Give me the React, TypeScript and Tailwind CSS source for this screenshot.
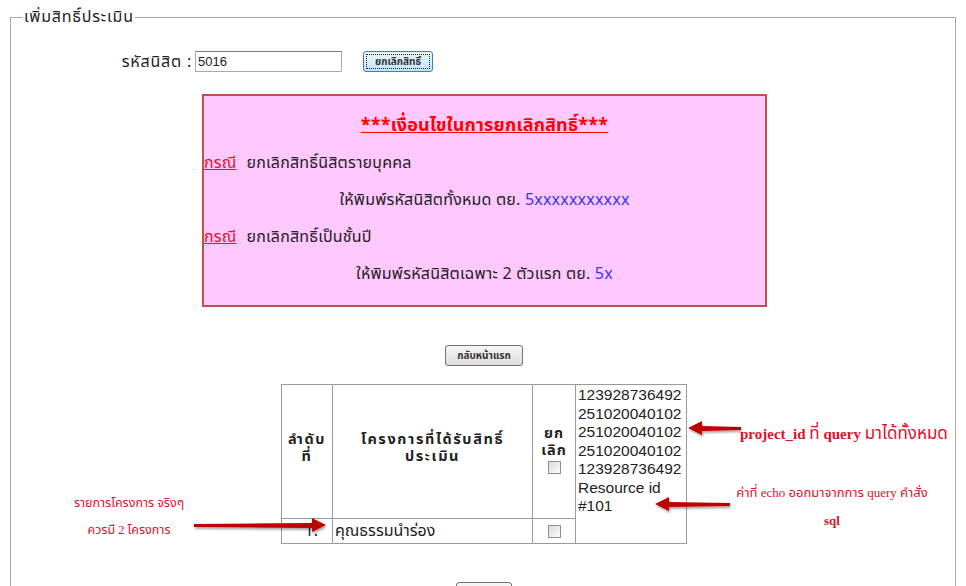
import React from "react";

const Arrow = ({ w, dir }: { w: number; dir: "left" | "right" }) => (
  <svg width={w} height={20} viewBox={`0 0 ${w} 20`} className="block">
    <defs>
      <filter id={`sh-${dir}-${w}`} x="-10%" y="-50%" width="120%" height="200%">
        <feDropShadow dx="1" dy="2" stdDeviation="1.2" floodColor="#000" floodOpacity="0.35" />
      </filter>
    </defs>
    {dir === "left" ? (
      <g filter={`url(#sh-${dir}-${w})`} fill="#c00000">
        <polygon points={`0,9 14,2 14,7 ${w - 1},8 ${w - 1},11 14,12 14,16`} />
      </g>
    ) : (
      <g filter={`url(#sh-${dir}-${w})`} fill="#c00000">
        <polygon points={`${w},9 ${w - 14},2 ${w - 14},7 1,8 1,11 ${w - 14},12 ${w - 14},16`} />
      </g>
    )}
  </svg>
);

const Checkbox = () => (
  <span className="inline-block w-[13px] h-[13px] border border-[#8f8f8f] bg-gradient-to-br from-[#dcdcdc] to-[#fbfbfb] align-middle" />
);

const Btn = ({ children, w, focus }: { children: React.ReactNode; w: number; focus?: boolean }) => (
  <div
    style={{ width: w }}
    className={
      focus
        ? "h-[21px] rounded-[3px] border border-[#3c7fb1] bg-gradient-to-b from-[#eaf6fd] to-[#bee6fd] p-[2px] flex"
        : "h-[21px] rounded-[3px] border border-[#707070] bg-gradient-to-b from-[#f6f6f6] to-[#dcdcdc] flex items-center justify-center"
    }
  >
    {focus ? (
      <div className="flex-1 border border-dotted border-[#222] flex items-center justify-center text-[10px] font-bold text-[#333] leading-none">
        {children}
      </div>
    ) : (
      <span className="text-[10px] font-bold text-[#333] leading-none">{children}</span>
    )}
  </div>
);

export default function App() {
  const thai = "font-['Tahoma','Noto_Sans_Thai','Noto_Sans','DejaVu_Sans',sans-serif]";
  return (
    <div className={`relative w-[966px] h-[586px] overflow-hidden bg-white text-[#222] ${thai}`}>
      <fieldset className="ml-[10px] w-[946px] mt-[8px] h-[620px] border border-[#a8a8a8] px-[12px]">
        <legend className="px-[1px] text-[16px] tracking-[0.8px] leading-[18px] text-[#222]">เพิ่มสิทธิ์ประเมิน</legend>

        <div className="mt-[25px] flex items-center h-[21px]">
          <div className="w-[169px] text-right text-[16px] tracking-[0.8px] leading-[20px]">รหัสนิสิต :</div>
          <div className="ml-[3px] w-[147px] h-[21px] border border-[#a5acb5] border-t-[#7a7a7a] flex items-center pl-[2px] text-[13px] leading-none font-['Tahoma','Liberation_Sans',sans-serif]">
            5016
          </div>
          <div className="ml-[21px]">
            <Btn w={70} focus>ยกเลิกสิทธิ์</Btn>
          </div>
        </div>

        <div className="ml-[179px] mt-[22px] w-[565px] h-[213px] border-2 border-[#c0504d] bg-[#ffc8ff] pt-[20px] text-[16px] tracking-[0.2px]">
          <div className="h-[20px] leading-[20px] text-center">
            <span className="text-[#ff0000] font-bold underline text-[18px]">***เงื่อนไขในการยกเลิกสิทธิ์***</span>
          </div>
          <div className="mt-[17px] h-[20px] leading-[20px]">
            <span className="text-[#e8102a] underline">กรณี</span>
            <span className="ml-[10px]">ยกเลิกสิทธิ์นิสิตรายบุคคล</span>
          </div>
          <div className="mt-[17px] h-[20px] leading-[20px] text-center">
            ให้พิมพ์รหัสนิสิตทั้งหมด ตย. <span className="text-[#3333ff]">5xxxxxxxxxxx</span>
          </div>
          <div className="mt-[17px] h-[20px] leading-[20px]">
            <span className="text-[#e8102a] underline">กรณี</span>
            <span className="ml-[10px]">ยกเลิกสิทธิ์เป็นชั้นปี</span>
          </div>
          <div className="mt-[17px] h-[20px] leading-[20px] text-center">
            ให้พิมพ์รหัสนิสิตเฉพาะ 2 ตัวแรก ตย. <span className="text-[#3333ff]">5x</span>
          </div>
        </div>

        <div className="mt-[38px] flex justify-center pl-[2px]">
          <Btn w={78}>กลับหน้าแรก</Btn>
        </div>

        <div className="mt-[18px] ml-[258px]">
          <table className="border-collapse border border-[#9a9a9a] text-[16px]">
            <tbody>
              <tr className="h-[134px]">
                <td className="w-[51px] border border-[#9a9a9a] text-center align-middle font-bold text-[14.5px] tracking-[1.6px] leading-[17px] p-0 pb-[5px]">
                  ลำดับ
                  <br />
                  ที่
                </td>
                <td className="w-[200px] border border-[#9a9a9a] text-center align-middle font-bold text-[14.5px] tracking-[1.6px] leading-[17px] p-0 pb-[5px]">
                  โครงการที่ได้รับสิทธิ์
                  <br />
                  ประเมิน
                </td>
                <td className="w-[43px] border border-[#9a9a9a] text-center align-middle font-bold text-[14.5px] tracking-[1px] leading-[17px] p-0">
                  ยก
                  <br />
                  เลิก
                  <br />
                  <Checkbox />
                </td>
                <td
                  rowSpan={2}
                  className="w-[111px] border border-[#9a9a9a] align-top pl-[2px] pt-[1px] text-[15.5px] leading-[18.5px] font-['Tahoma','Liberation_Sans','DejaVu_Sans',sans-serif] text-[#222]"
                >
                  123928736492
                  <br />
                  251020040102
                  <br />
                  251020040102
                  <br />
                  251020040102
                  <br />
                  123928736492
                  <br />
                  Resource id
                  <br />
                  #101
                </td>
              </tr>
              <tr className="h-[22px]">
                <td className="border border-[#9a9a9a] text-right pr-[14px] p-0 leading-[18px]">1.</td>
                <td className="border border-[#9a9a9a] pl-[2px] p-0 leading-[18px]">คุณธรรมนำร่อง</td>
                <td className="border border-[#9a9a9a] text-center p-0">
                  <Checkbox />
                </td>
              </tr>
            </tbody>
          </table>
        </div>

        <div className="mt-[38px] flex justify-center pl-[2px]">
          <Btn w={56}>กลับ</Btn>
        </div>
      </fieldset>

      {/* annotations */}
      <div className="absolute left-[688px] top-[419px]">
        <Arrow w={54} dir="left" />
      </div>
      <div className="absolute left-[740px] top-[424px] text-[15px] font-bold text-[#e0102a] leading-[20px] whitespace-nowrap font-['Liberation_Serif','Tahoma','Noto_Sans_Thai',serif]">
        project_id <span className="text-[17px] font-normal">ที่</span> query{" "}
        <span className="text-[17px] font-normal">มาได้ทั้งหมด</span>
      </div>

      <div className="absolute left-[655px] top-[495px]">
        <Arrow w={76} dir="left" />
      </div>
      <div className="absolute left-[727px] top-[485px] w-[210px] text-center text-[13px] text-[#e0102a] leading-[16px] font-['Liberation_Serif','Tahoma','Noto_Sans_Thai',serif]">
        <div>ค่าที่ echo ออกมาจากการ query คำสั่ง</div>
        <div className="mt-[12px] font-bold">sql</div>
      </div>

      <div className="absolute left-[59px] top-[495px] w-[140px] text-center text-[12.5px] text-[#e0102a] leading-[16px] font-['Liberation_Serif','Tahoma','Noto_Sans_Thai',serif]">
        <div>รายการโครงการ จริงๆ</div>
        <div className="mt-[11px]">ควรมี 2 โครงการ</div>
      </div>
      <div className="absolute left-[193px] top-[516px]">
        <Arrow w={133} dir="right" />
      </div>
    </div>
  );
}
